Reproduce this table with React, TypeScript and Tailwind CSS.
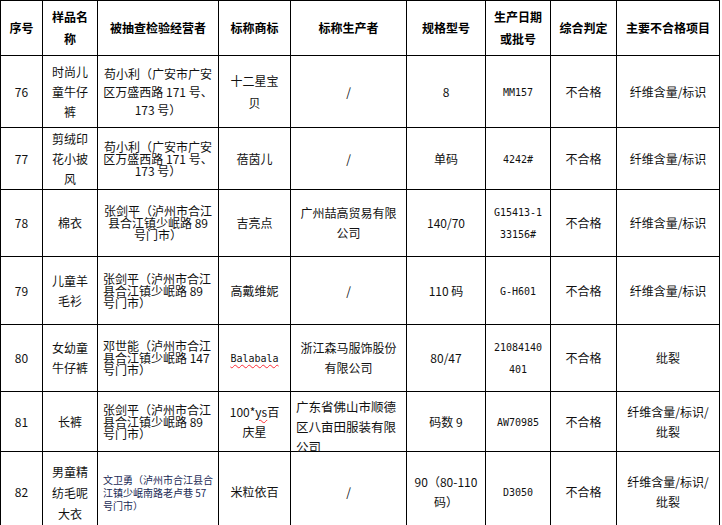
import type { ReactNode } from 'react'

type Row = {
  cells: ReactNode[]
  // per-cell classes replacing the default alignment/leading, keyed by column index
  extra?: Record<number, string>
}

// SimSun-style half-width codes
function Code({ children }: { children: ReactNode }) {
  return <span className="font-['DejaVu_Sans_Mono',monospace] text-[10px]">{children}</span>
}

function Squiggle({ children }: { children: ReactNode }) {
  return (
    <span className="underline decoration-wavy decoration-red-500 decoration-1 underline-offset-2">
      {children}
    </span>
  )
}

const header = [
  '序号',
  <>样品名<br />称</>,
  '被抽查检验经营者',
  '标称商标',
  '标称生产者',
  '规格型号',
  <>生产日期<br />或批号</>,
  '综合判定',
  '主要不合格项目',
]

const base = 'items-center justify-center text-center leading-[20px]'
const addrTight = 'items-center justify-center text-center leading-[12px]'
const addrLeft = 'items-center justify-start text-left pl-[5px] leading-[12px]'

const rows: Row[] = [
  {
    cells: [
      '76',
      <>时尚儿<br />童牛仔<br />裤</>,
      <>苟小利（广安市广安<br />区万盛西路 171 号、<br />173 号）</>,
      <>十二星宝<br />贝</>,
      '/',
      '8',
      <Code>MM157</Code>,
      '不合格',
      '纤维含量/标识',
    ],
    extra: { 2: 'items-center justify-center text-center leading-[18px]', 3: 'items-center justify-center text-center leading-[22px]' },
  },
  {
    cells: [
      '77',
      <>剪绒印<br />花小披<br />风</>,
      <>苟小利（广安市广安<br />区万盛西路 171 号、<br />173 号）</>,
      '蓓茵儿',
      '/',
      '单码',
      <Code>4242#</Code>,
      '不合格',
      '纤维含量/标识',
    ],
    extra: { 2: addrTight },
  },
  {
    cells: [
      '78',
      '棉衣',
      <>张剑平（泸州市合江<br />县合江镇少岷路 89<br />号门市）</>,
      '吉亮点',
      <>广州喆高贸易有限<br />公司</>,
      '140/70',
      <><Code>G15413-1</Code><br /><Code>33156#</Code></>,
      '不合格',
      '纤维含量/标识',
    ],
    extra: { 2: addrTight },
  },
  {
    cells: [
      '79',
      <>儿童羊<br />毛衫</>,
      <>张剑平（泸州市合江<br />县合江镇少岷路 89<br />号门市）</>,
      '高戴维妮',
      '/',
      '110 码',
      <Code>G-H601</Code>,
      '不合格',
      '纤维含量/标识',
    ],
    extra: { 2: addrLeft },
  },
  {
    cells: [
      '80',
      <>女幼童<br />牛仔裤</>,
      <>邓世能（泸州市合江<br />县合江镇少岷路 147<br />号门市）</>,
      <Code><Squiggle>Balabala</Squiggle></Code>,
      <>浙江森马服饰股份<br />有限公司</>,
      '80/47',
      <><Code>21084140</Code><br /><Code>401</Code></>,
      '不合格',
      '纰裂',
    ],
    extra: { 2: addrLeft },
  },
  {
    cells: [
      '81',
      '长裤',
      <>张剑平（泸州市合江<br />县合江镇少岷路 89<br />号门市）</>,
      <>100*<Squiggle>ys</Squiggle>百<br />庆星</>,
      <>广东省佛山市顺德<br />区八亩田服装有限<br />公司</>,
      '码数 9',
      <Code>AW70985</Code>,
      '不合格',
      <>纤维含量/标识/<br />纰裂</>,
    ],
    extra: {
      2: addrLeft,
      4: 'items-start justify-start text-left pl-[5px] pt-[5px] text-[12.5px] leading-[20px]',
    },
  },
  {
    cells: [
      '82',
      <>男童精<br />纺毛呢<br />大衣</>,
      <>文卫勇（泸州市合江县合<br />江镇少岷南路老卢巷 57<br />号门市）</>,
      '米粒依百',
      '/',
      <>90（80-110<br />码）</>,
      <Code>D3050</Code>,
      '不合格',
      <>纤维含量/标识/<br />纰裂</>,
    ],
    extra: {
      1: 'items-center justify-center text-center leading-[21px]',
      2: 'items-center justify-start text-left pl-[5px] text-[10px] leading-[13px] text-[#1a2a55]',
    },
  },
]

export default function App() {
  return (
    <div className="w-[722px] h-[525px] overflow-hidden bg-white font-['Noto_Sans_CJK_SC','Liberation_Sans',sans-serif] text-[12px] text-[#111]">
      <div className="grid w-[720px] grid-cols-[41px_54px_120px_71px_115px_78px_64px_65px_102px] grid-rows-[54px_71px_61px_66px_67px_66px_59px_80px] gap-px bg-black p-px">
        {header.map((h, i) => (
          <div
            key={`h${i}`}
            className="flex items-center justify-center bg-white text-center font-bold leading-[22px] text-black"
          >
            <span>{h}</span>
          </div>
        ))}
        {rows.map((row, r) =>
          row.cells.map((c, i) => (
            <div
              key={`${r}-${i}`}
              className={`flex bg-white whitespace-nowrap ${row.extra?.[i] ?? base}`}
            >
              <span>{c}</span>
            </div>
          ))
        )}
      </div>
    </div>
  )
}
